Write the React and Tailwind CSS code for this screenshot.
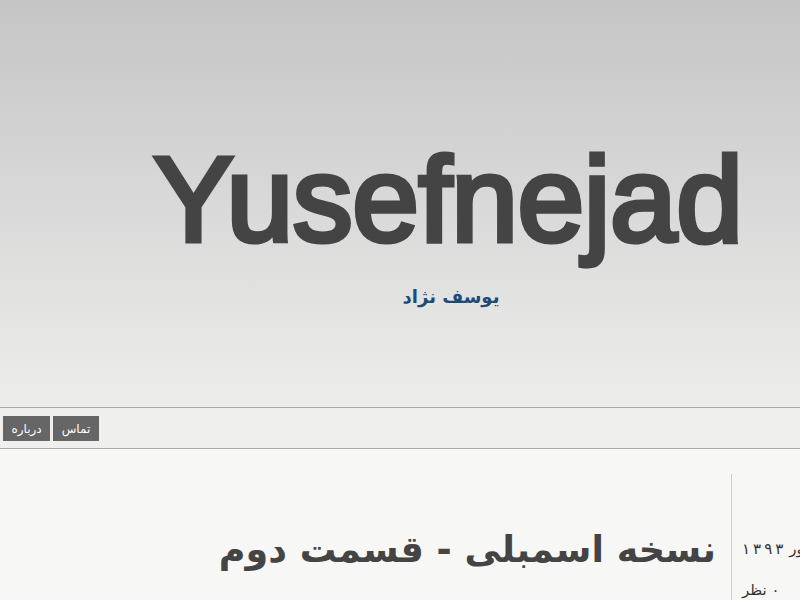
export default function App() {
  const year = ['۱', '۳', '۹', '۳'];
  return (
    <div className="w-[800px] h-[600px] overflow-hidden bg-[#f7f7f5] font-['DejaVu_Sans',sans-serif]">
      {/* Header */}
      <header className="h-[407px] bg-gradient-to-b from-[#c5c5c5] to-[#ededec] flex flex-col items-center pl-[96px] pt-[124px]">
        <h1 className="font-['Liberation_Sans',Arial,sans-serif] text-[120px] leading-[150px] tracking-[-0.5px] text-[#444444] [-webkit-text-stroke:5px_#444444]">
          Yusefnejad
        </h1>
        <div dir="rtl" className="mt-[8px] pl-[6px] font-bold text-[18px] leading-[30px] text-[#1d4a7a]">
          یوسف نژاد
        </div>
      </header>

      {/* Nav */}
      <nav className="h-[42px] border-t border-b border-[#a9a9a9] bg-[#efefee] flex items-start gap-[3px] pl-[3px] pt-[8px]">
        <a className="h-[25px] w-[47px] bg-[#666666] text-white text-[12px] flex items-center justify-center">درباره</a>
        <a className="h-[25px] w-[46px] bg-[#666666] text-white text-[12px] flex items-center justify-center">تماس</a>
      </nav>

      {/* Content */}
      <div className="flex pt-[25px]">
        <main className="w-[731px] flex justify-end pr-[15px] pt-[51px]">
          <h2 dir="rtl" className="font-bold text-[36.5px] leading-[50px] text-[#444444]">
            نسخه اسمبلی - قسمت دوم
          </h2>
        </main>
        <aside className="border-l border-[#cccccc] h-[200px] pl-[10px] pt-[64px] w-[69px] overflow-visible">
          <div dir="rtl" className="whitespace-nowrap text-[15px] leading-[22px] text-[#333333] w-max flex gap-[6px]">
            <span>۲۰ شهریور</span>
            <span dir="ltr" className="flex gap-[3px]">
              {year.map((d, i) => (
                <span key={i}>{d}</span>
              ))}
            </span>
          </div>
          <div dir="rtl" className="whitespace-nowrap text-[15px] leading-[22px] text-[#333333] mt-[19px] w-max">
            ۰ نظر
          </div>
        </aside>
      </div>
    </div>
  );
}
